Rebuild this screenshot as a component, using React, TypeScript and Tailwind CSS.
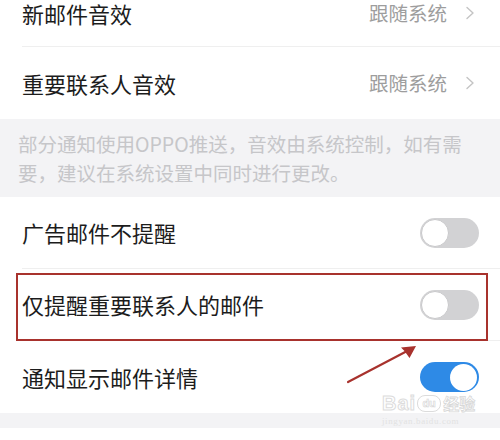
import React from "react";

const Chevron = () => (
  <svg width="10" height="14" viewBox="0 0 10 14" className="ml-[18px]">
    <path d="M2 1.5 L8 7 L2 12.5" fill="none" stroke="#c4c4c4" strokeWidth="1.4" strokeLinecap="round" strokeLinejoin="round" />
  </svg>
);

const Toggle = ({ on }: { on?: boolean }) =>
  on ? (
    <div className="w-[59px] h-[30px] rounded-full bg-[#2e8ae6] flex items-center justify-end pr-[2px]">
      <div className="w-[27px] h-[27px] rounded-full bg-white" />
    </div>
  ) : (
    <div className="w-[59px] h-[30px] rounded-full bg-[#d2d2d4] flex items-center pl-[1px]">
      <div className="w-[28px] h-[28px] rounded-full bg-white border-[1.5px] border-[#c9c9cb]" />
    </div>
  );

const NavRow = ({ title, cls, border }: { title: string; cls: string; border?: boolean }) => (
  <div className="pl-[22px] flex">
    <div className={`flex-1 flex items-center pr-[25px] ${cls} ${border ? "border-b border-[#efefef]" : ""}`}>
      <span className="flex-1 text-[22px] leading-[26px] text-[#1c1c1c]">{title}</span>
      <span className="text-[19.5px] leading-[26px] text-[#9d9d9d]">跟随系统</span>
      <Chevron />
    </div>
  </div>
);

const ToggleRow = ({ title, on, border }: { title: string; on?: boolean; border?: boolean }) => (
  <div className="pl-[22px] h-[72px] flex">
    <div className={`flex-1 flex items-center pr-[21px] ${border ? "border-b border-[#efefef]" : ""}`}>
      <span className="flex-1 text-[22px] text-[#1c1c1c]">{title}</span>
      <Toggle on={on} />
    </div>
  </div>
);

export default function App() {
  return (
    <div
      className="relative w-[500px] h-[440px] overflow-hidden bg-white"
      style={{ fontFamily: '"Noto Sans CJK SC", "Noto Sans", sans-serif' }}
    >
      <div>
        <NavRow title="新邮件音效" cls="h-[47px] pb-[21px]" border />
        <NavRow title="重要联系人音效" cls="h-[72px]" />
      </div>
      <div className="h-[78px] bg-[#f3f3f5] pl-[18px] pt-[10px] text-[19.5px] leading-[29px] text-[#c6c6c9]">
        部分通知使用OPPO推送，音效由系统控制，如有需
        <br />
        要，建议在系统设置中同时进行更改。
      </div>
      <div>
        <ToggleRow title="广告邮件不提醒" border />
        <ToggleRow title="仅提醒重要联系人的邮件" border />
        <ToggleRow title="通知显示邮件详情" on />
      </div>
      <div className="h-[15px] bg-[#f3f3f5]" />

      {/* annotation box */}
      <div className="absolute left-[16px] top-[273px] w-[472px] h-[68px] border-[2.5px] border-[#a8322d]" />
      {/* arrow */}
      <svg className="absolute left-0 top-0" width="500" height="440" viewBox="0 0 500 440">
        <line x1="348" y1="382" x2="410" y2="349.5" stroke="#a8322d" strokeWidth="2.2" strokeLinecap="round" />
        <path d="M416 346 L401 347.5 L404.5 351 L409.5 358 Z" fill="#a8322d" />
      </svg>
      {/* watermark */}
      <div className="absolute left-[382px] top-[393px] flex flex-col items-start pointer-events-none">
        <div className="flex items-center leading-none">
          <span
            className="text-[20px] font-bold text-white tracking-[1px] [-webkit-text-stroke:1px_#dcdcdc]"
            style={{ fontFamily: '"Liberation Sans", sans-serif' }}
          >
            Bai
          </span>
          <span className="ml-[1px] w-[24px] h-[17px] rounded-[8px] border border-[#dcdcdc] text-[11px] text-white [-webkit-text-stroke:0.6px_#d4d4d4] flex items-center justify-center font-bold" style={{ fontFamily: '"Liberation Sans", sans-serif' }}>
            du
          </span>
          <span className="ml-[2px] text-[16px] font-bold text-white [-webkit-text-stroke:0.8px_#d8d8d8]">经验</span>
        </div>
        <span
          className="mt-[2px] text-[9px] text-[#e2e2e2] tracking-[0.6px]"
          style={{ fontFamily: '"Liberation Serif", serif' }}
        >
          jingyan.baidu.com
        </span>
      </div>
    </div>
  );
}
